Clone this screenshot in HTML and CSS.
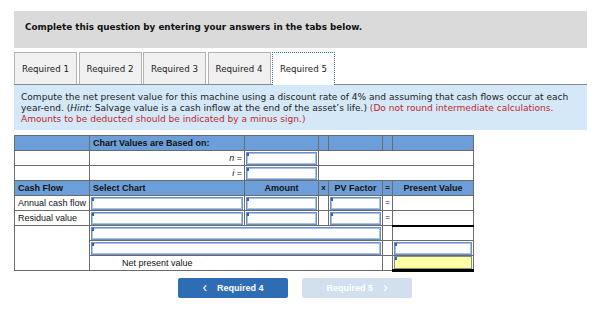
FILE: index.html
```html
<!DOCTYPE html>
<html>
<head>
<meta charset="utf-8">
<link rel="stylesheet" href="styles.css">
</head>
<body>
<div class="wrap">
  <div class="banner">Complete this question by entering your answers in the tabs below.</div>
  <div class="tabs">
    <div class="tab">Required 1</div>
    <div class="tab">Required 2</div>
    <div class="tab">Required 3</div>
    <div class="tab">Required 4</div>
    <div class="tab active">Required 5</div>
    <div class="tabline"></div>
  </div>
  <div class="prompt">
    <p class="line">Compute the net present value for this machine using a discount rate of 4% and assuming that cash flows occur at each</p>
    <p class="line">year-end. (<i>Hint:</i> Salvage value is a cash inflow at the end of the asset’s life.) <span class="red">(Do not round intermediate calculations.</span></p>
    <p class="line red">Amounts to be deducted should be indicated by a minus sign.)</p>
  </div>

  <table class="grid">
    <colgroup>
      <col class="c1"><col class="c2"><col class="c3"><col class="c4"><col class="c5"><col class="c6"><col class="c7">
    </colgroup>
    <tr class="hd">
      <td></td><td class="b">Chart Values are Based on:</td><td></td><td></td><td></td><td></td><td></td>
    </tr>
    <tr>
      <td></td><td class="eq"><i>n</i> =</td><td class="in"><div class="inp"></div></td><td colspan="4"></td>
    </tr>
    <tr>
      <td></td><td class="eq"><i>i</i> =</td><td class="in"><div class="inp"></div></td><td colspan="4"></td>
    </tr>
    <tr class="hd">
      <td class="b">Cash Flow</td><td class="b">Select Chart</td><td class="b ctr">Amount</td><td class="b ctr sm">x</td><td class="b ctr">PV Factor</td><td class="b ctr sm">=</td><td class="b ctr">Present Value</td>
    </tr>
    <tr>
      <td>Annual cash flow</td><td class="in"><div class="inp"></div></td><td class="in"><div class="inp"></div></td><td></td><td class="in"><div class="inp"></div></td><td class="ctr sm">=</td><td></td>
    </tr>
    <tr>
      <td>Residual value</td><td class="in"><div class="inp"></div></td><td class="in"><div class="inp"></div></td><td></td><td class="in"><div class="inp"></div></td><td class="ctr sm">=</td><td></td>
    </tr>
    <tr>
      <td rowspan="3"></td><td colspan="4" class="in"><div class="inp"></div></td><td></td><td class="sumtop"></td>
    </tr>
    <tr>
      <td colspan="4" class="in"><div class="inp"></div></td><td></td><td class="in"><div class="inp"></div></td>
    </tr>
    <tr>
      <td colspan="4" class="npv">Net present value</td><td></td><td class="in total"><div class="inp yellow"></div></td>
    </tr>
  </table>

  <div class="nav">
    <div class="btn prev"><span class="chev">&#x2039;</span>Required 4</div>
    <div class="btn next">Required 5<span class="chev">&#x203A;</span></div>
  </div>
</div>
</body>
</html>
```
FILE: styles.css
```css
* { box-sizing: border-box; }
body {
  margin: 0;
  background: #fff;
  font-family: "DejaVu Sans", Verdana, sans-serif;
  color: #111;
}
.wrap {
  width: 573px;
  margin: 11px 0 0 14px;
}
.banner {
  height: 37px;
  background: #dadada;
  font-weight: bold;
  font-size: 8.8px;
  padding: 11px 0 0 11px;
}
.tabs {
  display: flex;
  align-items: flex-end;
  margin-top: 4px;
  height: 33px;
  border-bottom: 1px solid #8a8a8a;
}
.tab {
  height: 32px;
  width: 63px;
  margin-right: 1.5px;
  border: 1px solid #b3b3b3;
  border-bottom: none;
  background: #f0f0f0;
  font-size: 8.7px;
  color: #222;
  display: flex;
  align-items: center;
  justify-content: center;
}
.tab.active {
  background: #fff;
  border: 1px dotted #3b6fb6;
  border-bottom: none;
  height: 33px;
  margin-bottom: -1px;
}
.tabline { flex: 1; }
.prompt {
  background: #d5e8f7;
  font-size: 9.05px;
  padding: 7px 8px 6px 7px;
  height: 45px;
  color: #222;
}
.line {
  margin: 0;
  height: 11px;
  line-height: 11px;
  white-space: nowrap;
}
.red { color: #c0272d; }

.grid {
  margin-top: 5px;
  border-collapse: collapse;
  table-layout: fixed;
  width: 459px;
  font-family: "Liberation Sans", Arial, sans-serif;
  font-size: 9px;
  color: #111;
}
.c1 { width: 75px; }
.c2 { width: 155px; }
.c3 { width: 74px; }
.c4 { width: 10px; }
.c5 { width: 54px; }
.c6 { width: 10px; }
.c7 { width: 81px; }
.grid tr { height: 15px; }
.grid td {
  border: 1px solid #6b6b6b;
  height: 15px;
  padding: 0 3px;
  line-height: 12px;
  white-space: nowrap;
  overflow: hidden;
  vertical-align: middle;
}
.grid tr.hd td { background: #6c9fd9; }
.grid td.b { font-weight: bold; }
.grid td.ctr { text-align: center; }
.grid td.sm { padding: 0; font-size: 8px; }
.grid td.eq { text-align: right; padding-right: 2px; }
.grid td.in { padding: 0 1px; }
.inp {
  position: relative;
  height: 13px;
  border: 1px solid #6d90c4;
  box-shadow: inset 0 0 0 1px #a9c1e4;
  background: #fff;
}
.inp::before {
  content: "";
  position: absolute;
  left: 0;
  top: 0;
  width: 2px;
  height: 3px;
  background: #2b63c0;
}
.inp.yellow {
  background: #ffffa6;
  border-color: #7b9680;
  box-shadow: none;
}
.grid td.sumtop { border-top: 2px solid #000; }
.grid td.total { border-bottom: 3px solid #000; }
.grid td.npv { padding-left: 32px; }

.nav {
  display: flex;
  gap: 14px;
  margin: 6px 0 0 164px;
}
.btn {
  width: 110px;
  height: 20px;
  border-radius: 2px;
  font-family: "Liberation Sans", Arial, sans-serif;
  font-weight: bold;
  font-size: 9px;
  color: #fff;
  display: flex;
  align-items: center;
  justify-content: center;
  gap: 10px;
}
.btn .chev { font-size: 14px; font-weight: normal; line-height: 1; margin-top: -2px; }
.prev { background: #2e6db4; }
.next { background: #d2dfef; }
```
